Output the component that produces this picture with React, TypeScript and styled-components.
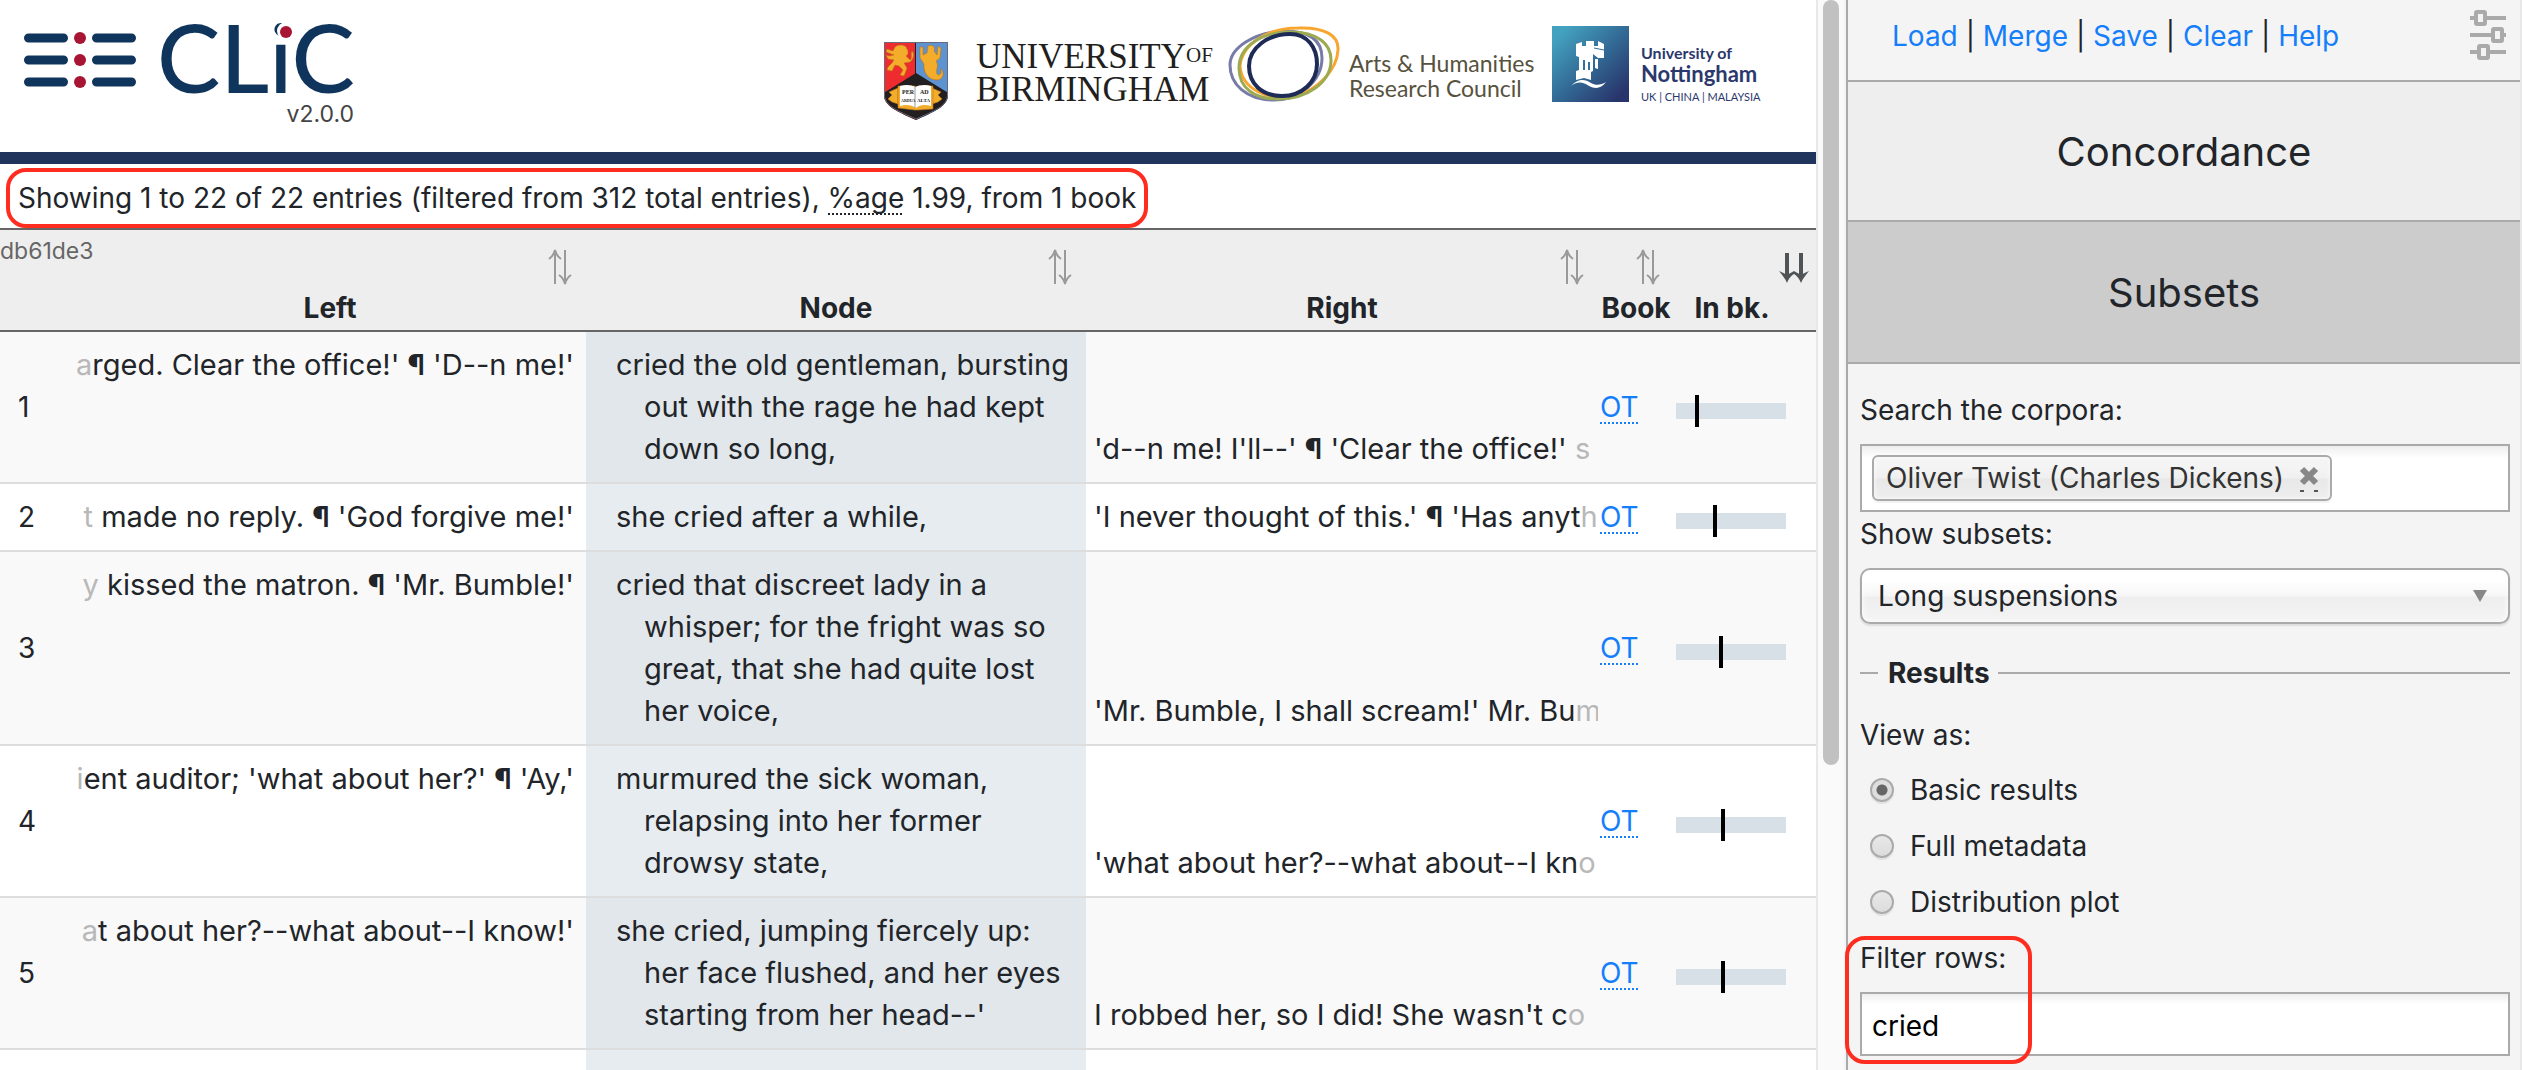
import React, { useState } from "react";
import styled, { createGlobalStyle, css } from "styled-components";

const GlobalStyle = createGlobalStyle`
  *, *::before, *::after { box-sizing: border-box; }
  body {
    margin: 0;
    overflow: hidden;
    background: #fff;
    color: #212529;
    font-family: Inter, "Liberation Sans", sans-serif;
    font-size: 28px;
    line-height: 42px;
  }
  button, input, select { font: inherit; color: inherit; }
`;

const Page = styled.div`
  display: grid;
  grid-template-columns: minmax(0, 1fr) 30px 676px;
  height: 100vh;
  overflow: hidden;
`;

/* ---------- main column ---------- */

const Main = styled.main`
  min-width: 0;
  overflow: hidden;
`;

const Header = styled.header`
  display: flex;
  justify-content: space-between;
  align-items: flex-start;
  height: 164px;
  padding: 26px 56px 0 24px;
  border-bottom: 12px solid #20345c;
`;

const Brand = styled.div`
  display: flex;
  flex-direction: column;
  align-items: flex-end;
`;

const BrandLogo = styled.svg`
  display: block;
  overflow: visible;
`;

const Version = styled.span`
  font-size: 23px;
  line-height: 30px;
  margin-top: 5px;
  color: #444;
`;

const Partners = styled.div`
  display: flex;
  align-items: flex-start;
  gap: 16px;
`;

const Partner = styled.div<{ $width: number; $gap: number }>`
  display: flex;
  gap: ${(p) => p.$gap}px;
  width: ${(p) => p.$width}px;
  white-space: nowrap;
`;

const Crest = styled.svg`
  flex: none;
  margin-top: 16px;
`;

const Mark = styled.svg`
  flex: none;
`;

const BirminghamName = styled.div`
  margin-top: 14px;
  color: #231f20;
  font-family: "Liberation Serif", serif;
  font-size: 35px;
  line-height: 33px;
`;

const Raised = styled.span`
  font-size: 21px;
  vertical-align: 6px;
  line-height: 1px;
`;

const CouncilName = styled.div`
  margin-top: 25px;
  color: #57523d;
  font-family: Lato, sans-serif;
  font-size: 23px;
  line-height: 25px;
`;

const NottinghamName = styled.div`
  display: flex;
  flex-direction: column;
  margin-top: 18px;
  color: #2b386d;
  font-family: Lato, sans-serif;
  font-weight: 700;
`;

const NameLine = styled.span<{ $size: number; $height: number; $thin?: boolean }>`
  font-size: ${(p) => p.$size}px;
  line-height: ${(p) => p.$height}px;
  ${(p) => p.$thin && css`font-weight: 400;`}
`;

const InfoRow = styled.div`
  display: flex;
  padding: 4px 6px 0;
`;

const InfoBox = styled.p`
  margin: 0;
  height: 60px;
  padding: 5px 8px;
  border: 4px solid #ff2d1f;
  border-radius: 20px;
  white-space: nowrap;
`;

const Abbr = styled.abbr`
  text-decoration: none;
  background: repeating-linear-gradient(90deg, #212529 0 2px, transparent 2px 4px) 0 100% / 100% 2px no-repeat;
`;

/* ---------- concordance table ---------- */

const Table = styled.table`
  width: 100%;
  table-layout: fixed;
  border-collapse: separate;
  border-spacing: 0;
`;

const Col = styled.col<{ $width?: number }>`
  ${(p) => p.$width && css`width: ${p.$width}px;`}
`;

const Th = styled.th`
  height: 104px;
  padding: 19px 0 1px;
  background: #eee;
  border-top: 2px solid #666;
  border-bottom: 2px solid #666;
  font-weight: 700;
  white-space: nowrap;
  vertical-align: top;
`;

const HashTh = styled(Th)`
  padding: 0;
  color: #666;
  font-size: 23px;
  font-weight: 400;
  text-align: left;
`;

const SortButton = styled.button<{ $pad: number }>`
  display: flex;
  flex-direction: column;
  width: 100%;
  padding: 0;
  border: 0;
  background: none;
  cursor: pointer;
  svg {
    display: block;
    margin: 0 ${(p) => p.$pad}px 2px auto;
  }
`;

const SortLabel = styled.span<{ $pad?: number }>`
  width: 100%;
  padding-right: ${(p) => p.$pad ?? 0}px;
  text-align: center;
`;

const Row = styled.tr`
  background: #fff;
  &:nth-child(odd) { background: #f9f9f9; }
`;

const Td = styled.td`
  padding: 12px 0;
  border-bottom: 2px solid #ddd;
  vertical-align: middle;
`;

const NumberTd = styled(Td)`
  padding-left: 18px;
`;

const LeftTd = styled(Td)`
  padding-right: 12px;
  font-size: 29px;
  vertical-align: top;
`;

const RightTd = styled(Td)`
  font-size: 29px;
  vertical-align: bottom;
`;

const NodeTd = styled(Td)`
  padding: 12px 10px 12px 58px;
  background: #e6ecef;
  font-size: 29px;
  text-indent: -28px;
  vertical-align: top;
  ${Row}:nth-child(odd) & { background: #e1e7ea; }
`;

const Context = styled.div<{ $side: "left" | "right" }>`
  display: flex;
  justify-content: ${(p) => (p.$side === "left" ? "flex-end" : "flex-start")};
  padding-left: ${(p) => (p.$side === "left" ? 0 : 8)}px;
  overflow: hidden;
  white-space: pre;
`;

const Edge = styled.span`
  color: #b8b8b8;
`;

const BookLink = styled.a`
  display: inline-block;
  margin-left: 2px;
  color: #157efb;
  line-height: 34px;
  text-decoration: none;
  background: repeating-linear-gradient(90deg, #157efb 0 2px, transparent 2px 4px) 0 100% / 100% 2px no-repeat;
`;

const Plot = styled.div`
  position: relative;
  width: 110px;
  height: 16px;
  margin: 8px 0 0 2px;
  background: #d6e0e6;
`;

const Tick = styled.span`
  position: absolute;
  top: -8px;
  bottom: -8px;
  width: 4px;
  background: #000;
`;

/* ---------- scroll track ---------- */

const Track = styled.div`
  display: flex;
  align-items: flex-start;
  justify-content: center;
  background: #fafafa;
  border-left: 2px solid #e8e8e8;
  border-right: 2px solid #f4f4f4;
`;

const Thumb = styled.div`
  width: 16px;
  height: 71.5%;
  border-radius: 8px;
  background: #c1c1c1;
`;

/* ---------- sidebar ---------- */

const Sidebar = styled.aside`
  border-left: 2px solid #aaa;
  border-right: 2px solid #e8e8e8;
  background: #f4f4f4;
`;

const Toolbar = styled.nav`
  display: flex;
  justify-content: space-between;
  align-items: flex-start;
  height: 82px;
  padding: 10px 14px 0 44px;
  border-bottom: 2px solid #aaa;
`;

const Links = styled.div`
  padding-top: 5px;
  a { color: #157efb; text-decoration: none; }
`;

const IconButton = styled.button`
  padding: 0;
  border: 0;
  background: none;
  cursor: pointer;
  svg { display: block; }
`;

const SectionButton = styled.button<{ $active?: boolean }>`
  display: block;
  width: 100%;
  height: ${(p) => (p.$active ? 142 : 140)}px;
  padding: 2px 0 0;
  border: 0;
  border-bottom: 2px solid #aaa;
  background: ${(p) => (p.$active ? "#ccc" : "#eee")};
  font-size: 40px;
  line-height: 50px;
  cursor: pointer;
`;

const Form = styled.form`
  display: flex;
  flex-direction: column;
  padding: 25px 10px 14px 12px;
`;

const Label = styled.label`
  display: block;
  margin-bottom: 13px;
`;

const Group = styled.div`
  margin-bottom: 28px;
`;

const TagInput = styled.div`
  display: flex;
  align-items: center;
  height: 68px;
  margin-bottom: 1px;
  padding: 0 10px;
  border: 2px solid #aaa;
  background: linear-gradient(#eee, #fff 12px);
`;

const TagSearch = styled.input`
  flex: 1;
  min-width: 0;
  padding: 0;
  border: 0;
  outline: 0;
  background: transparent;
`;

const Tag = styled.span`
  display: flex;
  align-items: center;
  gap: 14px;
  height: 46px;
  padding: 0 10px 0 12px;
  border: 2px solid #aaa;
  border-radius: 6px;
  background: linear-gradient(#f4f4f4 20%, #f0f0f0 50%, #e8e8e8 52%, #eee);
  box-shadow: 0 0 4px #fff inset, 0 2px 0 rgba(0, 0, 0, 0.05);
  color: #333;
  white-space: nowrap;
`;

const SelectWrap = styled.div`
  position: relative;
`;

const Select = styled.select`
  display: block;
  width: 100%;
  height: 56px;
  padding: 0 50px 0 16px;
  appearance: none;
  border: 2px solid #aaa;
  border-radius: 10px;
  background: linear-gradient(#fff 20%, #f6f6f6 50%, #eee 52%, #f4f4f4);
  box-shadow: 0 0 6px #fff inset, 0 2px 2px rgba(0, 0, 0, 0.1);
`;

const SelectArrow = styled.svg`
  position: absolute;
  top: 22px;
  right: 23px;
  pointer-events: none;
`;

const Results = styled.fieldset`
  margin: 0;
  padding: 20px 0 0;
  border: 0;
  border-top: 2px solid #aaa;
  min-width: 0;
`;

const Legend = styled.legend`
  margin-left: 18px;
  padding: 0 8px 0 10px;
  font-weight: 700;
`;

const RadioLabel = styled.label`
  display: flex;
  align-items: center;
  gap: 16px;
  margin-bottom: 14px;
  padding-left: 10px;
`;

const Radio = styled.input`
  flex: none;
  width: 24px;
  height: 24px;
  margin: 0;
  appearance: none;
  border: 2px solid #aaa;
  border-radius: 50%;
  background: linear-gradient(#e8e8e8, #dcdcdc);
  box-shadow: 0 2px 1px rgba(0, 0, 0, 0.08);
  &:checked { background: radial-gradient(circle, #666 0 5px, #dedede 6px); }
`;

const FilterField = styled.div`
  position: relative;
  &::after {
    content: "";
    position: absolute;
    left: -15px;
    top: -1px;
    width: 187px;
    height: 128px;
    border: 4px solid #ff2d1f;
    border-radius: 20px;
    pointer-events: none;
  }
`;

const TextInput = styled.input`
  display: block;
  width: 100%;
  height: 64px;
  padding: 4px 10px 0;
  border: 2px solid #aaa;
  border-radius: 0;
  background: linear-gradient(#eee, #fff 10px);
  color: #000;
`;

/* ---------- drawings ---------- */

const ClicLogo = () => (
  <BrandLogo width="330" height="68" viewBox="24 26 330 68" role="img" aria-label="CLiC">
    <g stroke="#10355c" strokeWidth="9" strokeLinecap="round">
      {[38, 60, 82].map((y) => (
        <path key={y} d={`M28.500 ${y}H63.500M96.500 ${y}H131.500`} />
      ))}
    </g>
    <g fill="#a81434">
      {[38, 60, 82].map((y) => (
        <circle key={y} cx="80" cy={y} r="6" />
      ))}
    </g>
    <text x="157" y="93" fontFamily="Lato, sans-serif" fontSize="95" fontWeight="500" fill="#10355c">
      CLiC
    </text>
    <circle cx="286" cy="31" r="9" fill="#fff" />
    <circle cx="286" cy="32" r="6" fill="#a81434" />
  </BrandLogo>
);

const BirminghamCrest = () => (
  <Crest width="64" height="78" viewBox="0 0 64 78" aria-hidden="true">
    <clipPath id="shield">
      <path d="M0 0H64V53C64 64 50 70 32 78C14 70 0 64 0 53Z" />
    </clipPath>
    <g clipPath="url(#shield)">
      <rect width="32" height="78" fill="#ee2b2e" />
      <rect x="32" width="32" height="78" fill="#5e93d1" />
      <path d="M-2 52L32 31L66 52V80H-2Z" fill="#231f20" />
      <rect x="31" width="1" height="32" fill="#231f20" />
    </g>
    <path d="M0.500 0.500H63.500V53C63.500 64 50 69 32 77C14 69 0.500 64 0.500 53Z" fill="none" stroke="#6a6a78" strokeWidth="1" />
    <g fill="#f4ad2b" stroke="#b8741a" strokeWidth="0.600">
      <path d="M11 5C14 2 22 2 23 7C25 10 24 13 22 14L26 18C29 16 26 13 28 9C31 12 29 18 26 20L20 21L23 26L20 34L16 33L19 28L15 24L11 23L8 29L3 28L4 25L8 21L10 18L4 17L2 13L5 14L10 13L2 10L3 7L9 9Z" />
      <path d="M44 4C48 2 52 5 50 9L53 13L54 4L57 6L56 16L52 19C56 24 50 30 54 33C57 33 58 30 56 27C61 28 60 38 53 38C44 38 39 30 40 22L36 16L36 5L39 5L39 13L43 11Z" />
      <path d="M14 46L5 50L8 53L4 57L8 60L14 62ZM48 46L57 50L54 53L58 57L54 60L48 62Z" />
      <path d="M14 44H31L32 46L34 44H49V67L34 68L31 68L14 66Z" />
    </g>
    <path d="M16 44C22 42 28 43 31 45C35 43 42 42 47 44V64C41 62 35 63 32 66C28 63 22 62 16 64Z" fill="#fff" />
    <path d="M31 45V66" stroke="#999" strokeWidth="1" />
    <g fontFamily="Liberation Serif, serif" fontSize="6" fontWeight="700" fill="#231f20">
      <text x="18" y="52">PER</text>
      <text x="36" y="52">AD</text>
      <text x="17" y="60" fontSize="4">ARDUA</text>
      <text x="33" y="60" fontSize="5">ALTA</text>
    </g>
  </Crest>
);

const CouncilRings = () => (
  <Mark width="112" height="76" viewBox="0 0 112 76" fill="none" strokeWidth="3" aria-hidden="true">
    <path d="M2 39C2 22 26 6 56 5C82 5 94 14 94 32C94 56 70 74 46 74C18 74 2 58 2 39Z" stroke="#777ba8" />
    <path d="M12 40C14 18 40 2 70 2C98 1 111 10 110 24C109 44 90 64 66 71C40 74 14 64 12 40Z" stroke="#f9a630" />
    <path d="M11 42C11 20 34 6 62 6C90 6 103 18 103 34C103 56 80 73 50 73C26 73 11 62 11 42Z" stroke="#9cab52" />
    <path d="M21 40C21 22 40 8 62 8C80 8 89 22 89 38C89 56 74 70 54 70C34 70 21 58 21 40Z" stroke="#1e2b56" strokeWidth="4" />
  </Mark>
);

const NottinghamMark = () => (
  <Mark width="77" height="76" viewBox="0 0 77 76" aria-hidden="true">
    <linearGradient id="sea" x1="0.100" y1="0.100" x2="0.900" y2="0.900">
      <stop offset="0" stopColor="#43a2bf" />
      <stop offset="0.500" stopColor="#336b96" />
      <stop offset="1" stopColor="#28356b" />
    </linearGradient>
    <rect width="77" height="76" fill="url(#sea)" />
    <g fill="#fff">
      <path d="M24 18L30 16V20H34V15H42V20H46V15L52 18V32H46L41 28V45L39 46V54L32 52L24 54V45L27 44V31L24 30Z" />
      <path d="M43 33H46V43L43 42Z" />
      <path d="M19 60C26 52 33 53 39 57C44 60 49 59 54 56C49 63 43 63 37 60C31 56 26 55 19 60Z" />
    </g>
    <path d="M32 34V44M37 36V44" stroke="#34719a" strokeWidth="2" />
    <path d="M42 22L52 24" stroke="#34719a" strokeWidth="1" />
  </Mark>
);

const SortIcon = () => (
  <svg width="24" height="36" viewBox="0 0 24 36" fill="none" stroke="#999" strokeWidth="2" aria-hidden="true">
    <path d="M7 35V2M1 10C4 8 6 5 7 1C8 5 10 8 13 10M17 1V34M11 26C14 28 16 31 17 35C18 31 20 28 23 26" />
  </svg>
);

const SortedIcon = () => (
  <svg width="30" height="36" viewBox="0 0 30 36" aria-hidden="true">
    <path d="M8 4V30M22 4V30" stroke="#4f5356" strokeWidth="4" />
    <path d="M0 22C3 23 6 25 8 26C10 25 13 23 15 22C17 23 20 25 22 26C24 25 27 23 30 22C27 26 24 29 22 34C20 29 18 27 15 25C12 27 10 29 8 34C6 29 3 26 0 22Z" fill="#4f5356" />
  </svg>
);

const SlidersIcon = () => (
  <svg width="36" height="50" viewBox="0 0 36 50" fill="none" stroke="#aaa" strokeWidth="4" aria-hidden="true">
    <path d="M0 8H6M15 8H36M0 25H22M33 25H36M0 42H8M19 42H36" />
    <rect x="6" y="2" width="9" height="12" rx="1" />
    <rect x="23" y="19" width="9" height="12" rx="1" />
    <rect x="9" y="36" width="9" height="12" rx="1" />
  </svg>
);

const RemoveIcon = () => (
  <svg width="22" height="30" viewBox="0 0 22 30" aria-hidden="true">
    <path d="M4 6L18 20M18 6L4 20" stroke="#888" strokeWidth="6" />
    <path d="M2 28h4M16 28h4" stroke="#555" strokeWidth="2" />
  </svg>
);

/* ---------- data ---------- */

type Line = {
  left: React.ReactNode;
  node: string;
  right: React.ReactNode;
  position: number;
};

const Pilcrow = () => <b>¶</b>;

const lines: Line[] = [
  {
    left: <><Edge>a</Edge>rged. Clear the office!' <Pilcrow /> 'D--n me!'</>,
    node: "cried the old gentleman, bursting out with the rage he had kept down so long,",
    right: <>'d--n me! I'll--' <Pilcrow /> 'Clear the office!' <Edge>s</Edge></>,
    position: 17,
  },
  {
    left: <><Edge>t</Edge> made no reply. <Pilcrow /> 'God forgive me!'</>,
    node: "she cried after a while,",
    right: <>'I never thought of this.' <Pilcrow /> 'Has anyt<Edge>h</Edge></>,
    position: 34,
  },
  {
    left: <><Edge>y</Edge> kissed the matron. <Pilcrow /> 'Mr. Bumble!'</>,
    node: "cried that discreet lady in a whisper; for the fright was so great, that she had quite lost her voice,",
    right: <>'Mr. Bumble, I shall scream!' Mr. Bu<Edge>m</Edge></>,
    position: 39,
  },
  {
    left: <><Edge>i</Edge>ent auditor; 'what about her?' <Pilcrow /> 'Ay,'</>,
    node: "murmured the sick woman, relapsing into her former drowsy state,",
    right: <>'what about her?--what about--I kn<Edge>o</Edge></>,
    position: 41,
  },
  {
    left: <><Edge>a</Edge>t about her?--what about--I know!'</>,
    node: "she cried, jumping fiercely up: her face flushed, and her eyes starting from her head--'",
    right: <>I robbed her, so I did! She wasn't c<Edge>o</Edge></>,
    position: 41,
  },
];

const actions = ["Load", "Merge", "Save", "Clear", "Help"];
const views = ["Basic results", "Full metadata", "Distribution plot"];

export default function App() {
  const [view, setView] = useState(views[0]);
  const [filter, setFilter] = useState("cried");

  return (
    <Page>
      <GlobalStyle />
      <Main>
        <Header>
          <Brand>
            <ClicLogo />
            <Version>v2.0.0</Version>
          </Brand>
          <Partners>
            <Partner $width={328} $gap={28}>
              <BirminghamCrest />
              <BirminghamName>
                UNIVERSITY<Raised>OF</Raised>
                <br />
                BIRMINGHAM
              </BirminghamName>
            </Partner>
            <Partner $width={308} $gap={9}>
              <CouncilRings />
              <CouncilName>
                Arts &amp; Humanities
                <br />
                Research Council
              </CouncilName>
            </Partner>
            <Partner $width={208} $gap={12}>
              <NottinghamMark />
              <NottinghamName>
                <NameLine $size={16} $height={18}>University of</NameLine>
                <NameLine $size={22} $height={24}>Nottingham</NameLine>
                <NameLine $size={11} $height={22} $thin>UK | CHINA | MALAYSIA</NameLine>
              </NottinghamName>
            </Partner>
          </Partners>
        </Header>

        <InfoRow>
          <InfoBox>
            Showing 1 to 22 of 22 entries (filtered from 312 total entries), <Abbr>%age</Abbr> 1.99, from 1 book
          </InfoBox>
        </InfoRow>

        <Table>
          <colgroup>
            <Col $width={74} />
            <Col />
            <Col $width={500} />
            <Col />
            <Col $width={76} />
            <Col $width={142} />
          </colgroup>
          <thead>
            <tr>
              <HashTh scope="col">db61de3</HashTh>
              {["Left", "Node", "Right", "Book"].map((name) => (
                <Th key={name} scope="col">
                  <SortButton type="button" $pad={14}>
                    <SortIcon />
                    <SortLabel>{name}</SortLabel>
                  </SortButton>
                </Th>
              ))}
              <Th scope="col">
                <SortButton type="button" $pad={7}>
                  <SortedIcon />
                  <SortLabel $pad={26}>In bk.</SortLabel>
                </SortButton>
              </Th>
            </tr>
          </thead>
          <tbody>
            {lines.map((line, i) => (
              <Row key={i}>
                <NumberTd>{i + 1}</NumberTd>
                <LeftTd>
                  <Context $side="left"><span>{line.left}</span></Context>
                </LeftTd>
                <NodeTd>{line.node}</NodeTd>
                <RightTd>
                  <Context $side="right"><span>{line.right}</span></Context>
                </RightTd>
                <Td><BookLink href="#OT">OT</BookLink></Td>
                <Td>
                  <Plot><Tick style={{ left: `${line.position}%` }} /></Plot>
                </Td>
              </Row>
            ))}
            <Row>
              <NumberTd>&nbsp;</NumberTd>
              <LeftTd />
              <NodeTd />
              <RightTd />
              <Td />
              <Td />
            </Row>
          </tbody>
        </Table>
      </Main>

      <Track aria-hidden="true">
        <Thumb />
      </Track>

      <Sidebar>
        <Toolbar>
          <Links>
            {actions.map((name, i) => (
              <React.Fragment key={name}>
                {i > 0 && " | "}
                <a href={`#${name}`}>{name}</a>
              </React.Fragment>
            ))}
          </Links>
          <IconButton type="button" aria-label="Settings">
            <SlidersIcon />
          </IconButton>
        </Toolbar>
        <SectionButton type="button">Concordance</SectionButton>
        <SectionButton type="button" $active>Subsets</SectionButton>
        <Form onSubmit={(e) => e.preventDefault()}>
          <Label htmlFor="corpora">Search the corpora:</Label>
          <TagInput>
            <Tag>
              Oliver Twist (Charles Dickens)
              <IconButton type="button" aria-label="Remove">
                <RemoveIcon />
              </IconButton>
            </Tag>
            <TagSearch id="corpora" type="text" />
          </TagInput>
          <Group>
            <Label htmlFor="subsets">Show subsets:</Label>
            <SelectWrap>
              <Select id="subsets" defaultValue="Long suspensions">
                <option>Long suspensions</option>
              </Select>
              <SelectArrow width="14" height="12" viewBox="0 0 14 12" aria-hidden="true">
                <path d="M0 0H14L7 12Z" fill="#888" />
              </SelectArrow>
            </SelectWrap>
          </Group>
          <Results>
            <Legend>Results</Legend>
            <Label as="div">View as:</Label>
            {views.map((name) => (
              <RadioLabel key={name}>
                <Radio type="radio" name="view" checked={view === name} onChange={() => setView(name)} />
                {name}
              </RadioLabel>
            ))}
            <FilterField>
              <Label htmlFor="filter">Filter rows:</Label>
              <TextInput id="filter" type="text" value={filter} onChange={(e) => setFilter(e.target.value)} />
            </FilterField>
          </Results>
        </Form>
      </Sidebar>
    </Page>
  );
}
